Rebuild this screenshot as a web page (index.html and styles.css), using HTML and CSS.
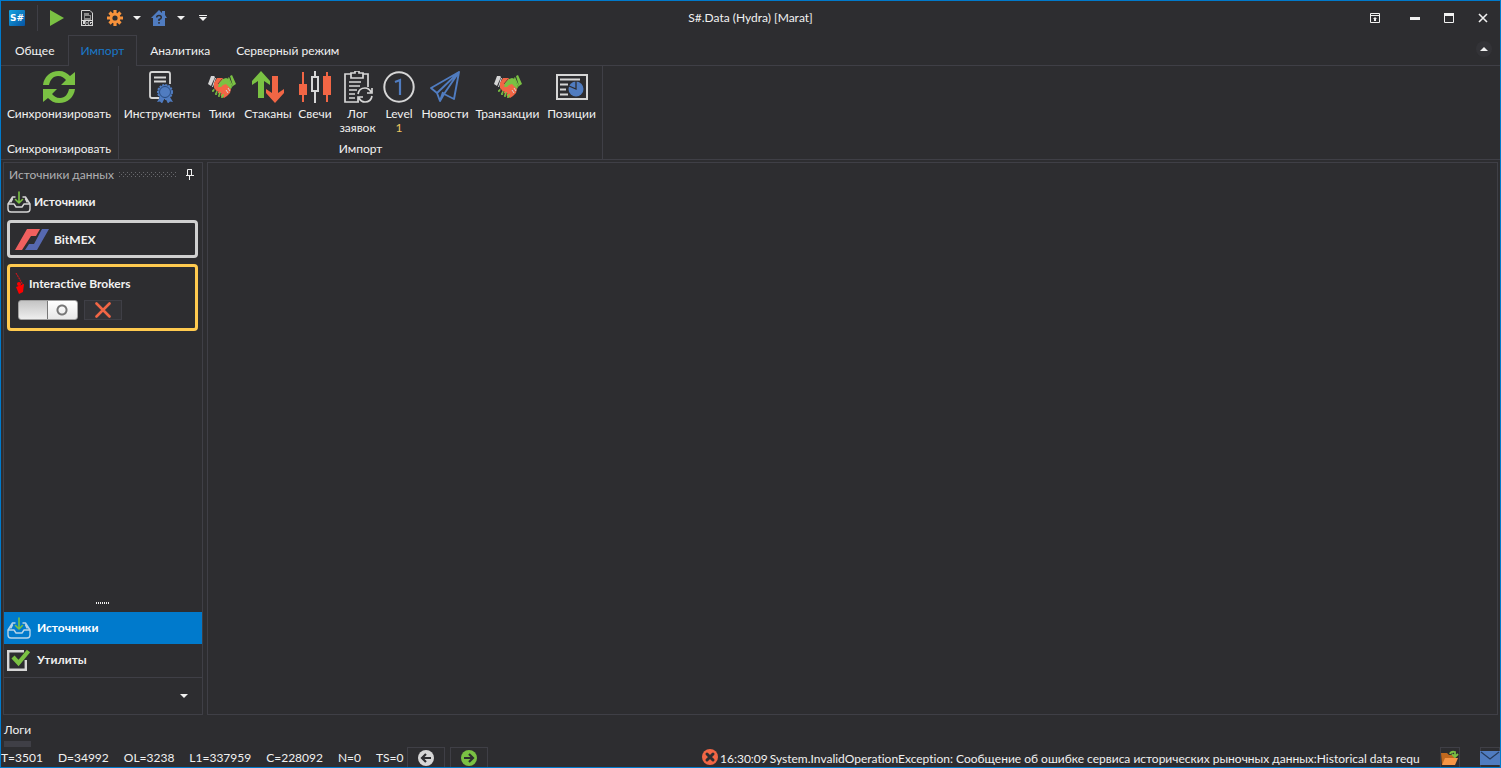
FILE: index.html
```html
<!DOCTYPE html>
<html lang="ru">
<head>
<meta charset="utf-8">
<title>S#.Data (Hydra) [Marat]</title>
<link rel="stylesheet" href="styles.css">
</head>
<body>
<svg class="defs" aria-hidden="true">
  <symbol id="handshake" viewBox="0 0 28 24">
    <path fill="#d6d6d6" d="M3 1h3l1 1-4 9-3-2z"/>
    <path fill="#d6d6d6" d="M7 3h1L5 12H4z"/>
    <path fill="#7ac143" d="m22 1 2-1 4 9-3 2zM20 3l1-1 4 9-1 1z"/>
    <path fill="#f26645" d="M9 3h5l4 3 5 8-1 4-3 3-3 2-4-3-6-7V8z"/>
    <path fill="#7ac143" d="m11 8 4-4 3-1 3 1 3 8-1 2-5-5-3 1-2 2h-3z"/>
    <path stroke="#7ac143" stroke-width="2" stroke-linecap="round" d="m6 15-1 1m4 1-1 2m4-1-1 3m4-1-1 2"/>
    <path stroke="#d6d6d6" stroke-width="1" d="m18 15 2 3m0-5 2 3"/>
    <path stroke="#2d2d30" stroke-width=".6" fill="none" d="m10 9 4-5m-7 10-1 3m4-1-1 3m4-1-1 3"/>
  </symbol>
  <symbol id="tray" viewBox="0 0 24 22">
    <g fill="none" stroke-linecap="round" stroke-linejoin="round">
      <path stroke="currentColor" stroke-width="1.400" d="M8 6H5.500L1 13v5q0 3 3 3h16q3 0 3-3v-5l-4.500-7H16M1 13h6l2 3h6l2-3h6M4 11l1.500-3M20 11l-1.500-3"/>
      <path stroke="#7ac143" stroke-width="1.600" d="M12 1v11M8.500 8.500 12 12l3.500-3.500"/>
    </g>
  </symbol>
  <symbol id="caret" viewBox="0 0 8 4"><path fill="currentColor" d="M0 0h8L4 4z"/></symbol>
</svg>

<div class="window">
  <header class="titlebar">
    <div class="quick">
      <svg class="logo" viewBox="0 0 16 16" aria-hidden="true">
        <defs><linearGradient id="lg" x2="1" y2="1"><stop stop-color="#15a5e2"/><stop offset="1" stop-color="#0653a3"/></linearGradient></defs>
        <rect width="16" height="16" rx="1" fill="url(#lg)"/>
        <text x="8" y="11" class="logo-text" text-anchor="middle">S#</text>
      </svg>
      <button class="tool first" aria-label="Запуск"><svg width="14" height="16" viewBox="0 0 14 16"><path fill="#7ac143" d="M0 0v16l14-8z"/></svg></button>
      <button class="tool" aria-label="Лог"><svg width="12" height="16" viewBox="0 0 12 16"><path fill="none" stroke="#d6d6d6" d="M.5 10V.5H9L11.500 3v7"/><path fill="#8c8c8c" d="M3 3h5v2h2v5H3z"/><path fill="#2d2d30" d="M4 6h5v2H4z"/><path fill="#d6d6d6" d="M0 10h12v6H0z"/><path fill="none" stroke="#2d2d30" d="M1.500 11v3.500H4M5 11.500h2v3H5zM11 11.500H8.500v3h2V13"/></svg></button>
      <button class="tool" aria-label="Настройки"><svg width="16" height="16" viewBox="-8 -8 16 16"><g stroke="#f7923b" stroke-width="3.200"><path d="M0-8V8M-8 0H8M-5.500-5.500l11 11M5.500-5.500l-11 11"/></g><circle r="5.300" fill="#f7923b"/><circle r="2.600" fill="#2d2d30"/></svg></button>
      <button class="tool drop" aria-label="Меню настроек"><svg width="8" height="4"><use href="#caret"/></svg></button>
      <button class="tool" aria-label="Справка"><svg width="16" height="16" viewBox="0 0 16 16"><path fill="#507cc0" d="m8 0 3 3V1h3v4l2 3h-2v8H2V8H0z"/><path fill="none" stroke="#2d2d30" stroke-width="1.500" d="M5.700 7.500q0-2 2.300-2t2.300 2Q10.300 9 8 9.500V11M8 12v1.800"/></svg></button>
      <button class="tool drop" aria-label="Меню справки"><svg width="8" height="4"><use href="#caret"/></svg></button>
      <button class="tool drop" aria-label="Настроить панель"><svg width="8" height="6" viewBox="0 0 8 6"><path fill="currentColor" d="M0 0h8v1H0zM0 2h8L4 6z"/></svg></button>
    </div>
    <h1 class="title">S#.Data (Hydra) [Marat]</h1>
    <div class="caption">
      <button class="cap" aria-label="Закрепить"><svg width="10" height="10" viewBox="0 0 10 10"><path fill="none" stroke="currentColor" d="M.5.5h9v9h-9zM0 2.500h10"/><path fill="currentColor" d="M5 4l2 2H6v2H4V6H3z"/></svg></button>
      <button class="cap" aria-label="Свернуть"><svg width="10" height="10" viewBox="0 0 10 10"><path fill="currentColor" d="M0 4h10v3H0z"/></svg></button>
      <button class="cap" aria-label="Развернуть"><svg width="10" height="10" viewBox="0 0 10 10"><path fill="none" stroke="currentColor" d="M.5.5h9v9h-9z"/><path fill="currentColor" d="M0 0h10v3H0z"/></svg></button>
      <button class="cap" aria-label="Закрыть"><svg width="10" height="10" viewBox="0 0 10 10"><path stroke="currentColor" stroke-width="1.600" d="m1 1 8 8M9 1 1 9"/></svg></button>
    </div>
  </header>

  <nav class="tabs">
    <button class="tab">Общее</button>
    <button class="tab active">Импорт</button>
    <button class="tab">Аналитика</button>
    <button class="tab">Серверный режим</button>
    <span class="tab-fill"></span>
    <button class="collapse" aria-label="Свернуть ленту"><svg width="16" height="16" viewBox="0 0 16 16"><circle cx="8" cy="8" r="8" fill="#333337"/><path fill="currentColor" d="m8 6 4 4H4z"/></svg></button>
  </nav>

  <section class="ribbon">
    <div class="group sync">
      <div class="items">
        <button class="item"><svg viewBox="0 0 32 32"><path id="arc" fill="#7ac143" d="M0 14C1 6 7 0 16 0c5 0 8 2 11 5l5-4v13H18l5-5c-2-2-4-4-8-4-5 0-8 4-9 9z"/><use href="#arc" transform="rotate(180 16 16)"/></svg><span>Синхронизировать</span></button>
      </div>
      <div class="group-name">Синхронизировать</div>
    </div>
    <div class="group import">
      <div class="items">
        <button class="item"><svg viewBox="0 0 32 32"><path fill="none" stroke="#d6d6d6" stroke-width="1.800" d="M13 27H6q-2 0-2-2V3q0-2 2-2h16q2 0 2 2v10M8 6.500h12M8 10.500h12"/><path fill="#507cc0" d="m14 26-3 5 3-.5 2 2 3-6 3 6 2-2 3 .5-3-5z"/><circle cx="19" cy="21" r="7" fill="#507cc0" stroke="#507cc0" stroke-width="2" stroke-dasharray="2 1"/><circle cx="19" cy="21" r="5.500" fill="#507cc0" stroke="#294b7e"/></svg><span>Инструменты</span></button>
        <button class="item"><svg class="shake" viewBox="0 0 28 24"><use href="#handshake"/></svg><span>Тики</span></button>
        <button class="item"><svg viewBox="0 0 32 32"><path fill="#7ac143" d="M9 0 18 10v4l-6-4v17H6V10l-6 4v-4z"/><path fill="#f26645" d="M20 5h6v17l6-4v4l-9 10-9-10v-4l6 4z"/></svg><span>Стаканы</span></button>
        <button class="item"><svg viewBox="0 0 32 32"><path fill="#f26645" d="M3 1h2v12h3v11H5v7H3v-7H0V13h3zM27 1h2v4h3v19h-3v7h-2v-7h-3V5h3z"/><path fill="none" stroke="#d6d6d6" stroke-width="2" d="M16 0v6m0 14v12M13 6h6v14h-6z"/></svg><span>Свечи</span></button>
        <button class="item"><svg viewBox="0 0 32 32"><g fill="none" stroke="#d6d6d6" stroke-width="1.700"><path d="M9 3H3v28h14M21 3h5v13M9 2h4V0h4v2h4v5H9zM7 11h12M7 15h11M7 19h8M7 23h6M7 27h6"/><path d="M16 23q1-6 7-6 4 0 6 4m1-4v5h-5M30 25q-1 6-7 6-4 0-6-4m-1 4v-5h5"/></g></svg><span>Лог<br>заявок</span></button>
        <button class="item"><svg viewBox="0 0 32 32"><circle cx="16" cy="16" r="14.700" fill="none" stroke="#d6d6d6" stroke-width="2"/><path fill="none" stroke="#507cc0" stroke-width="2.200" d="m12 11 5-2v15"/></svg><span>Level<br><span class="one">1</span></span></button>
        <button class="item"><svg viewBox="0 0 32 32"><path fill="none" stroke="#507cc0" stroke-width="1.900" stroke-linejoin="round" d="m2 17 28-16-5 27-10-5-4 7-3-8zm6 5L30 1 15 23m-4 7 3-9"/></svg><span>Новости</span></button>
        <button class="item"><svg class="shake" viewBox="0 0 28 24"><use href="#handshake"/></svg><span>Транзакции</span></button>
        <button class="item"><svg viewBox="0 0 32 32"><path fill="none" stroke="#d6d6d6" stroke-width="2" d="M1 4h30v24H1zM4 8.500h20M4 13.500h8M4 18.500h6M4 23.500h8"/><circle cx="20" cy="18" r="7.500" fill="#507cc0"/><path fill="none" stroke="#2d2d30" stroke-width="1.300" d="M20 10v8l-7-3"/></svg><span>Позиции</span></button>
      </div>
      <div class="group-name">Импорт</div>
    </div>
  </section>

  <main class="work">
    <aside class="panel">
      <header class="panel-head">
        <h2>Источники данных</h2>
        <span class="grip"></span>
        <button class="pin" aria-label="Закрепить панель"><svg width="8" height="11" viewBox="0 0 8 11"><path fill="none" stroke="currentColor" d="M1.500 6V.5h4V6M0 6.500h8M3.500 6v5"/><path fill="currentColor" d="M5 0h1v6H5z"/></svg></button>
      </header>
      <div class="section"><svg class="tray" width="24" height="22"><use href="#tray"/></svg><span>Источники</span></div>
      <article class="card">
        <div class="card-title bitmex"><svg width="34" height="22" viewBox="0 0 34 22"><path fill="#f0605f" d="M12 0h13l-4 7h-5L7 21H0z"/><path fill="#5668b0" d="M27 0h7L22 21H10l4-6h5z"/></svg><span>BitMEX</span></div>
      </article>
      <article class="card selected">
        <div class="card-title"><svg width="10" height="21" viewBox="0 0 10 21"><path stroke="#c4161c" stroke-width="1.200" stroke-dasharray="2 .6" d="m1 0 7 12"/><circle cx="4" cy="11" r="2" fill="#f00"/><path fill="#f00" d="m1 14 8-3-1 8-4 2z"/></svg><span>Interactive Brokers</span></div>
        <div class="card-tools">
          <input class="switch" type="checkbox" role="switch" aria-label="Interactive Brokers">
          <button class="remove" aria-label="Удалить"><svg width="16" height="16" viewBox="0 0 16 16"><path stroke="#f26645" stroke-width="2.600" stroke-linecap="round" d="m1.500 1.500 13 13m0-13-13 13"/></svg></button>
        </div>
      </article>
      <div class="splitter"></div>
      <button class="nav active"><svg class="tray" width="24" height="22"><use href="#tray"/></svg><span>Источники</span></button>
      <button class="nav"><svg width="24" height="22" viewBox="0 0 24 22"><path fill="none" stroke="#d6d6d6" stroke-width="2.400" d="M17 2.200H1.200v18.600h17.600V11"/><path fill="none" stroke="#7ac143" stroke-width="4.200" d="m6 8 5.500 6L21.500 2"/></svg><span>Утилиты</span></button>
      <div class="overflow"><button aria-label="Другие разделы"><svg width="8" height="4"><use href="#caret"/></svg></button></div>
    </aside>
    <section class="document"></section>
  </main>

  <button class="logs">Логи</button>

  <footer class="status">
    <div class="counts">
      <span>T=3501</span><span>D=34992</span><span>OL=3238</span><span>L1=337959</span><span>C=228092</span><span>N=0</span><span>TS=0</span>
      <div class="arrows">
        <button class="box" aria-label="Назад"><svg width="16" height="16" viewBox="0 0 16 16"><circle cx="8" cy="8" r="8" fill="#d6d6d6"/><path fill="none" stroke="#2d2d30" stroke-width="2.200" d="M13 8H4m4-4L4 8l4 4"/></svg></button>
        <button class="box" aria-label="Вперёд"><svg width="16" height="16" viewBox="0 0 16 16"><circle cx="8" cy="8" r="8" fill="#7ac143"/><path fill="none" stroke="#2d2d30" stroke-width="2.200" d="M3 8h9M8 4l4 4-4 4"/></svg></button>
      </div>
    </div>
    <div class="message">
      <svg width="16" height="16" viewBox="0 0 16 16"><circle cx="8" cy="8" r="8" fill="#f26645"/><path stroke="#2d2d30" stroke-width="3" stroke-linecap="round" d="m5 5 6 6m0-6-6 6"/></svg>
      <time>16:30:09</time>
      <span class="error">System.InvalidOperationException: Сообщение об ошибке сервиса исторических рыночных данных:Historical data requ</span>
    </div>
    <div class="actions">
      <button class="box small" aria-label="Открыть папку"><svg width="18" height="16" viewBox="0 0 18 16"><path fill="#c2691e" d="M0 3h6l2 2h6v10H1z"/><path fill="#f79646" d="M4 8h13l-3 7H1z"/><path fill="none" stroke="#7ac143" stroke-width="1.800" d="M9 4q1-3 5-2v4m-3-2 3 3 3-3"/></svg></button>
      <button class="box small" aria-label="Сообщения"><svg width="20" height="14" viewBox="0 0 20 14"><path fill="#507cc0" d="M0 0h20v14H0z"/><path fill="none" stroke="#263b5c" stroke-width="1.200" d="m1 1 9 7 9-7"/></svg></button>
    </div>
  </footer>
</div>
</body>
</html>
```
FILE: styles.css
```css
* { box-sizing: border-box; }

body {
  margin: 0;
  background: #2d2d30;
  color: #f1f1f1;
  font: 12px/14px Lato, "Open Sans", sans-serif;
  font-variant-ligatures: none;
}

button {
  display: flex;
  align-items: center;
  justify-content: center;
  margin: 0;
  padding: 0;
  border: 0;
  background: none;
  color: inherit;
  font: inherit;
}

svg { display: block; flex: none; }
h1, h2 { margin: 0; font: inherit; }
.defs { position: absolute; width: 0; height: 0; }

.window {
  display: flex;
  flex-direction: column;
  min-height: 100vh;
  border: 1px solid #007acc;
}

/* Title bar */
.titlebar {
  display: grid;
  grid-template-columns: 1fr auto 1fr;
  align-items: center;
  height: 34px;
}
.quick { display: flex; align-items: center; padding-left: 8px; }
.logo { width: 16px; height: 16px; }
.logo-text { fill: #fff; font: bold 9px "DejaVu Sans", sans-serif; }
.tool { width: 28px; height: 26px; }
.tool.first { width: 36px; margin-left: 12px; padding-left: 2px; border-left: 1px solid #3f3f46; }
.tool.drop { width: 16px; }
.tool.drop + .drop { margin-left: 6px; }
.caption { display: flex; justify-content: flex-end; }
.cap { width: 34px; height: 32px; }
.cap:first-child { margin-right: 6px; }

/* Tabs */
.tabs { display: flex; height: 31px; }
.tab { padding: 2px 13px 0; border-bottom: 1px solid #3f3f46; }
.tab:first-child { padding-left: 14px; }
.tab.active { padding: 0 12px; border: 1px solid #3f3f46; border-bottom: 0; color: #1a78c8; }
.tab-fill { flex: 1; border-bottom: 1px solid #3f3f46; }
.collapse { width: 32px; padding-bottom: 2px; border-bottom: 1px solid #3f3f46; }

/* Ribbon */
.ribbon { display: flex; height: 94px; border-bottom: 1px solid #3f3f46; }
.group { display: flex; flex-direction: column; justify-content: space-between; border-right: 1px solid #3f3f46; padding: 5px 3px 3px; }
.sync { width: 118px; padding-right: 4px; }
.items { display: grid; }
.import .items { grid-template-columns: 80px 40px 52px 42px 43px 40px 52px 73px 55px; }
.item { flex-direction: column; justify-content: flex-start; gap: 4px; white-space: nowrap; }
.item svg { width: 32px; height: 32px; }
.item .shake { width: 28px; padding: 3px 0; }
.group-name { text-align: center; }
.one { color: #f0c860; }

/* Work area */
.work { display: flex; flex: 1; gap: 4px; padding: 2px 2px 0; }
.panel { display: flex; flex-direction: column; width: 200px; border: 1px solid #3f3f46; }
.document { flex: 1; border: 1px solid #3f3f46; }
.panel-head { display: flex; align-items: center; height: 23px; padding: 0 8px 0 5px; gap: 5px; color: #b0b0b2; }
.grip {
  flex: 1;
  height: 5px;
  background:
    conic-gradient(from 0deg at 1px 1px, transparent 270deg, #68686c 0) 0 0 / 4px 4px,
    conic-gradient(from 0deg at 1px 1px, transparent 270deg, #68686c 0) 2px 2px / 4px 4px;
}
.pin { width: 8px; margin-left: 5px; color: #f1f1f1; }
.section { display: flex; align-items: center; gap: 3px; height: 32px; margin-bottom: 2px; padding-left: 3px; font-weight: bold; }
.tray { color: #d6d6d6; }
.card { margin: 0 4px 6px 3px; border: 3px solid #d0d0d0; border-radius: 4px; padding: 6px 5px 4px; }
.selected { border-color: #ffca4f; }
.card-title { display: flex; align-items: center; gap: 4px; font-weight: bold; }
.bitmex { gap: 5px; height: 22px; }
.card-tools { display: flex; gap: 6px; padding: 6px 3px 4px; }
.switch {
  appearance: none;
  width: 60px;
  height: 20px;
  margin: 0;
  border: 1px solid #a0a0a0;
  border-radius: 3px;
  background:
    radial-gradient(circle, transparent 3px, #777 4px, #777 5px, transparent 6px) 29px 0 / 28px 18px no-repeat,
    linear-gradient(#777, #777) 28px 0 / 1px 18px no-repeat,
    linear-gradient(#fff, #e8e8e8) 29px 0 / 29px 18px no-repeat,
    linear-gradient(#c4c4c4, #eee);
}
.remove { width: 38px; height: 20px; border: 1px solid #3f3f46; background: #333337; }
.splitter {
  width: 14px;
  height: 2px;
  margin: auto auto 8px;
  background: repeating-linear-gradient(90deg, #f1f1f1 0 1px, transparent 1px 2px);
}
.nav { justify-content: flex-start; gap: 6px; height: 32px; padding: 0 0 0 3px; font-weight: bold; }
.nav.active { background: #007acc; color: #fff; }
.nav.active .tray { color: #b5d3e8; }
.overflow { display: flex; justify-content: flex-end; height: 37px; margin-top: 1px; padding-right: 14px; border-top: 1px solid #3f3f46; }

/* Logs and status */
.logs { align-self: flex-start; height: 32px; margin-left: 3px; padding: 3px 0 0; border-bottom: 6px solid #3f3f46; }
.status { display: flex; height: 20px; white-space: nowrap; }
.counts { display: flex; flex: 0 0 701px; gap: 15px; }
.counts > span { padding-top: 4px; }
.arrows { display: flex; gap: 5px; margin-left: -12px; }
.box { width: 38px; height: 20px; border: 1px solid #3f3f46; border-bottom: 0; }
.box.small { width: 20px; }
.message { display: flex; flex: 1; min-width: 0; gap: 2px; overflow: hidden; }
.message svg { margin-top: 2px; }
.message time, .error { padding-top: 5px; }
.actions { display: flex; gap: 20px; }
```
